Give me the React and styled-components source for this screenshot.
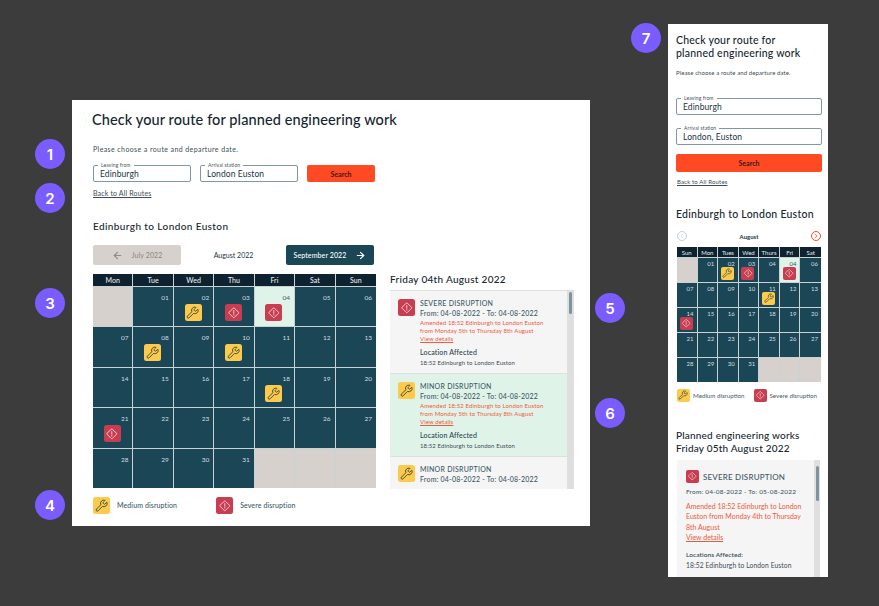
import React from "react";
import styled, { createGlobalStyle } from "styled-components";
import { ArrowLeft, ArrowRight, ChevronLeft, ChevronRight, Wrench } from "lucide-react";

const GlobalStyle = createGlobalStyle`
  * {
    margin: 0;
    padding: 0;
    box-sizing: border-box;
  }
  html, body {
    width: 879px;
    height: 606px;
    overflow: hidden;
    background: #3c3c3c;
    font-family: "Lato", "Noto Sans", sans-serif;
    color: #16303d;
  }
`;

const desktopDays = [
  [null, "01", "02", "03", "04", "05", "06"],
  ["07", "08", "09", "10", "11", "12", "13"],
  ["14", "15", "16", "17", "18", "19", "20"],
  ["21", "22", "23", "24", "25", "26", "27"],
  ["28", "29", "30", "31", null, null, null],
];

const mobileDays = [
  [null, "01", "02", "03", "04", "04", "06"],
  ["07", "08", "09", "10", "11", "12", "13"],
  ["14", "15", "16", "17", "18", "19", "20"],
  ["21", "22", "23", "24", "25", "26", "27"],
  ["28", "29", "30", "31", null, null, null],
];

const desktopMarks = {
  "0-2": "medium", "0-3": "severe", "0-4": "severe",
  "1-1": "medium", "1-3": "medium", "2-4": "medium", "3-0": "severe",
};

const mobileMarks = {
  "0-2": "medium", "0-3": "severe", "0-5": "severe",
  "1-4": "medium", "2-0": "severe",
};

const DiamondIcon = ({ size }) => (
  <svg width={size} height={size} viewBox="0 0 24 24" fill="none" stroke="currentColor" strokeWidth="1.5">
    <rect x="5.5" y="5.5" width="13" height="13" rx="1.5" transform="rotate(45 12 12)" />
    <path d="M12 8v5M12 15.2v1" strokeLinecap="round" />
  </svg>
);

const Badge = ({ kind, size, radius }) => (
  <Marker $kind={kind} $size={size} $radius={radius}>
    {kind === "severe" ? (
      <DiamondIcon size={size * 0.8} />
    ) : (
      <Wrench size={size * 0.78} strokeWidth={1.7} />
    )}
  </Marker>
);

const Calendar = ({ compact, heads, days, marks, today }) => (
  <CalendarGrid $compact={compact}>
    {heads.map((head) => (
      <HeadCell key={head} $compact={compact}>{head}</HeadCell>
    ))}
    {days.map((row, r) =>
      row.map((day, c) => (
        <DayCell key={`${r}-${c}`} $compact={compact} $empty={!day} $today={`${r}-${c}` === today}>
          {day}
          {marks[`${r}-${c}`] && (
            <MarkSlot $compact={compact}>
              <Badge kind={marks[`${r}-${c}`]} size={compact ? 13 : 17} radius={compact ? 2 : 2.5} />
            </MarkSlot>
          )}
        </DayCell>
      ))
    )}
  </CalendarGrid>
);

const Disruption = ({ kind, title, green, brief }) => (
  <Item $green={green}>
    <Badge kind={kind} size={17} radius={2.5} />
    <ItemBody>
      <ItemTitle>{title}</ItemTitle>
      <ItemDates>From: 04-08-2022 - To: 04-08-2022</ItemDates>
      {!brief && (
        <>
          <Amended>
            Amended 18:52 Edinburgh to London Euston
            <br />
            from Monday 5th to Thursday 8th August
            <br />
            <u>View details</u>
          </Amended>
          <ItemLabel>Location Affected</ItemLabel>
          <ItemLine>18:52 Edinburgh to London Euston</ItemLine>
        </>
      )}
    </ItemBody>
  </Item>
);

const App = () => {
  return (
    <Canvas>
      <GlobalStyle />

      <Desktop>
        <Title>Check your route for planned engineering work</Title>
        <Intro>Please choose a route and departure date.</Intro>
        <SearchRow>
          <Field $width={98}>
            <FieldLabel>Leaving from</FieldLabel>
            Edinburgh
          </Field>
          <Field $width={98}>
            <FieldLabel>Arrival station</FieldLabel>
            London Euston
          </Field>
          <SearchButton $width={68}>Search</SearchButton>
        </SearchRow>
        <BackLink>Back to All Routes</BackLink>
        <RouteHeading>Edinburgh to London Euston</RouteHeading>

        <MonthNav>
          <MonthButton $disabled>
            <ArrowLeft size={11} strokeWidth={2.5} />
            July 2022
          </MonthButton>
          <MonthName>August 2022</MonthName>
          <MonthButton>
            September 2022
            <ArrowRight size={11} strokeWidth={2.5} />
          </MonthButton>
        </MonthNav>

        <Columns>
          <div>
            <Calendar
              heads={["Mon", "Tue", "Wed", "Thu", "Fri", "Sat", "Sun"]}
              days={desktopDays}
              marks={desktopMarks}
              today="0-4"
            />
            <Legend>
              <LegendEntry>
                <Badge kind="medium" size={17} radius={2.5} />
                Medium disruption
              </LegendEntry>
              <LegendEntry>
                <Badge kind="severe" size={17} radius={2.5} />
                Severe disruption
              </LegendEntry>
            </Legend>
          </div>
          <div>
            <DayHeading>Friday 04th August 2022</DayHeading>
            <ListBox>
              <Disruption kind="severe" title="SEVERE DISRUPTION" />
              <Disruption kind="medium" title="MINOR DISRUPTION" green />
              <Disruption kind="medium" title="MINOR DISRUPTION" brief />
              <ScrollThumb />
            </ListBox>
          </div>
        </Columns>
      </Desktop>

      <Mobile>
        <MobileTitle>
          Check your route for
          <br />
          planned engineering work
        </MobileTitle>
        <MobileIntro>Please choose a route and departure date.</MobileIntro>
        <MobileForm>
          <Field>
            <FieldLabel>Leaving from</FieldLabel>
            Edinburgh
          </Field>
          <Field>
            <FieldLabel>Arrival station</FieldLabel>
            London, Euston
          </Field>
          <MobileSearch>Search</MobileSearch>
        </MobileForm>
        <MobileBack>Back to All Routes</MobileBack>
        <MobileRoute>Edinburgh to London Euston</MobileRoute>
        <MobileNav>
          <RoundArrow $color="#c5d0d6"><ChevronLeft size={8} strokeWidth={2} /></RoundArrow>
          <MobileMonth>August</MobileMonth>
          <RoundArrow $color="#ff4a24"><ChevronRight size={8} strokeWidth={2} /></RoundArrow>
        </MobileNav>
        <Calendar
          compact
          heads={["Sun", "Mon", "Tues", "Wed", "Thurs", "Fri", "Sat"]}
          days={mobileDays}
          marks={mobileMarks}
          today="0-5"
        />
        <MobileLegend>
          <MobileLegendEntry>
            <Badge kind="medium" size={13} radius={2} />
            Medium disruption
          </MobileLegendEntry>
          <MobileLegendEntry>
            <Badge kind="severe" size={13} radius={2} />
            Severe disruption
          </MobileLegendEntry>
        </MobileLegend>
        <MobileWorks>
          Planned engineering works
          <br />
          Friday 05th August 2022
        </MobileWorks>
        <MobileBox>
          <MobileItemHead>
            <Badge kind="severe" size={13} radius={2} />
            SEVERE DISRUPTION
          </MobileItemHead>
          <MobileDates>From: 04-08-2022 - To: 05-08-2022</MobileDates>
          <MobileAmended>
            Amended 18:52 Edinburgh to London
            <br />
            Euston from Monday 4th to Thursday
            <br />
            8th August
            <br />
            <u>View details</u>
          </MobileAmended>
          <MobileLabel>Locations Affected:</MobileLabel>
          <MobileLine>18:52 Edinburgh to London Euston</MobileLine>
          <MobileThumb />
        </MobileBox>
      </Mobile>

      <Step $x={35} $y={139}>1</Step>
      <Step $x={35} $y={183}>2</Step>
      <Step $x={35} $y={288}>3</Step>
      <Step $x={35} $y={490}>4</Step>
      <Step $x={595} $y={293}>5</Step>
      <Step $x={595} $y={398}>6</Step>
      <Step $x={631} $y={23}>7</Step>
    </Canvas>
  );
};

export default App;

const Canvas = styled.div`
  position: relative;
  width: 879px;
  height: 606px;
  overflow: hidden;
  background: #3c3c3c;
`;

/* the two artboards and the numbered pins sit on a free canvas */
const Desktop = styled.section`
  position: absolute;
  left: 72px;
  top: 100px;
  width: 518px;
  height: 426px;
  padding: 11px 14px 0 21px;
  background: #fff;
`;

const Mobile = styled.section`
  position: absolute;
  left: 668px;
  top: 24px;
  width: 160px;
  height: 553px;
  padding: 10px 6px 0 8px;
  background: #fff;
  overflow: hidden;
`;

const Step = styled.div`
  position: absolute;
  left: ${(p) => p.$x}px;
  top: ${(p) => p.$y}px;
  width: 30px;
  height: 30px;
  display: flex;
  align-items: center;
  justify-content: center;
  border-radius: 50%;
  background: #7a5cff;
  color: #fff;
  font-family: "Inter", sans-serif;
  font-size: 15px;
  font-weight: 600;
`;

const Title = styled.h1`
  margin-left: -1px;
  font-size: 14.5px;
  line-height: 18px;
  font-weight: 500;
  letter-spacing: 0.1px;
  color: #16262f;
`;

const Intro = styled.p`
  margin-top: 16px;
  font-size: 7px;
  line-height: 9px;
  letter-spacing: 0.4px;
  color: #3d4c55;
`;

const SearchRow = styled.div`
  display: flex;
  gap: 9px;
  margin-top: 11px;
`;

const Field = styled.div`
  position: relative;
  width: ${(p) => (p.$width ? `${p.$width}px` : "100%")};
  height: 17px;
  padding-left: 6px;
  border: 1px solid #7f98a3;
  border-radius: 2px;
  font-size: 8.5px;
  line-height: 16px;
  letter-spacing: 0.1px;
  color: #22353f;
`;

const FieldLabel = styled.span`
  position: absolute;
  left: 4px;
  top: -4px;
  padding: 0 3px;
  background: #fff;
  font-size: 5px;
  line-height: 6px;
  color: #44545c;
`;

const SearchButton = styled.button`
  width: ${(p) => (p.$width ? `${p.$width}px` : "100%")};
  height: 17px;
  border: 0;
  border-radius: 2px;
  background: #ff4a24;
  font-family: inherit;
  font-size: 7px;
  font-weight: 700;
  color: #3a1a12;
`;

const BackLink = styled.a`
  display: block;
  margin-top: 7px;
  font-size: 7px;
  line-height: 9px;
  letter-spacing: 0.15px;
  text-decoration: underline;
  color: #3d4c55;
`;

const RouteHeading = styled.h2`
  margin-top: 22px;
  font-size: 10px;
  line-height: 13px;
  font-weight: 500;
  letter-spacing: 0.4px;
  color: #16262f;
`;

const MonthNav = styled.div`
  display: grid;
  grid-template-columns: 88px 105px 88px;
  align-items: center;
  margin-top: 12px;
  width: 281px;
`;

const MonthButton = styled.div`
  display: flex;
  align-items: center;
  justify-content: center;
  gap: 9px;
  height: 20px;
  border-radius: 2px;
  font-size: 7px;
  font-weight: 500;
  letter-spacing: 0.1px;
  background: ${(p) => (p.$disabled ? "#d6d1cc" : "#1a4656")};
  color: ${(p) => (p.$disabled ? "#8f8b87" : "#fff")};
`;

const MonthName = styled.div`
  text-align: center;
  font-size: 7px;
  color: #22353f;
`;

const Columns = styled.div`
  display: grid;
  grid-template-columns: 283px 184px;
  column-gap: 14px;
  margin-top: 9px;
`;

const CalendarGrid = styled.div`
  display: grid;
  grid-template-columns: repeat(7, 1fr);
  grid-template-rows: ${(p) => (p.$compact ? "10px repeat(5, 25px)" : "12px repeat(5, 40.4px)")};
  width: ${(p) => (p.$compact ? "144px" : "283px")};
  margin-left: ${(p) => (p.$compact ? "1px" : "0")};
  background: #c9d2d5;
`;

const HeadCell = styled.div`
  display: flex;
  align-items: center;
  justify-content: center;
  background: #0f2230;
  color: #e8edef;
  font-size: ${(p) => (p.$compact ? "6px" : "7px")};
  font-weight: ${(p) => (p.$compact ? 400 : 500)};
  border-right: 1px solid #c9d2d5;
  &:nth-child(7) {
    border-right: 0;
  }
`;

const DayCell = styled.div`
  display: flex;
  flex-direction: column;
  align-items: flex-end;
  padding: ${(p) => (p.$compact ? "2px 3px 0 0" : "6px 4px 0 0")};
  font-size: ${(p) => (p.$compact ? "6px" : "6.5px")};
  line-height: ${(p) => (p.$compact ? "7px" : "9px")};
  border-right: 1px solid #c9d2d5;
  border-top: 1px solid #c9d2d5;
  &:nth-child(7n) {
    border-right: 0;
  }
  background: ${(p) => (p.$today ? "#e0f3e9" : p.$empty ? "#d6d1cc" : "#1a4656")};
  color: ${(p) => (p.$today ? "#3d5a68" : "#d4dde0")};
`;

const MarkSlot = styled.div`
  align-self: center;
  margin-top: ${(p) => (p.$compact ? "0" : "2px")};
  margin-left: ${(p) => (p.$compact ? "2px" : "3px")};
  line-height: 0;
`;

const Marker = styled.span`
  display: inline-flex;
  flex: none;
  align-items: center;
  justify-content: center;
  width: ${(p) => p.$size}px;
  height: ${(p) => p.$size}px;
  border-radius: ${(p) => p.$radius}px;
  background: ${(p) => (p.$kind === "severe" ? "#c83d50" : "#fcca4d")};
  color: ${(p) => (p.$kind === "severe" ? "#f7d9dc" : "#3f4a3a")};
`;

const Legend = styled.div`
  display: flex;
  gap: 39px;
  margin-top: 9px;
`;

const LegendEntry = styled.div`
  display: flex;
  align-items: center;
  gap: 7px;
  font-size: 7px;
  font-weight: 500;
  letter-spacing: 0.1px;
  color: #3e5a68;
`;

const DayHeading = styled.h3`
  margin-top: -1px;
  height: 17px;
  font-size: 10px;
  line-height: 12px;
  font-weight: 500;
  letter-spacing: 0.3px;
  color: #16262f;
`;

const ListBox = styled.div`
  position: relative;
  height: 199px;
  padding-right: 7px;
  overflow: hidden;
  background: #dfdfdf;
`;

const ScrollThumb = styled.div`
  position: absolute;
  right: 2px;
  top: 2px;
  width: 3px;
  height: 22px;
  border-radius: 2px;
  background: #7f92a0;
`;

const Item = styled.article`
  display: flex;
  gap: 5px;
  height: 83px;
  padding: 8px 6px 0 8px;
  border-top: 1px solid #dfdfdf;
  background: ${(p) => (p.$green ? "#e0f3e9" : "#f5f5f5")};
`;

const ItemBody = styled.div`
  min-width: 0;
`;

const ItemTitle = styled.div`
  font-size: 7px;
  line-height: 8px;
  font-weight: 500;
  letter-spacing: 0.25px;
  color: #3e5a68;
`;

const ItemDates = styled.div`
  margin-top: 2px;
  font-size: 7px;
  line-height: 9px;
  font-weight: 500;
  letter-spacing: 0.2px;
  color: #3e5a68;
`;

const Amended = styled.div`
  margin-top: 0.5px;
  font-size: 6px;
  line-height: 8px;
  letter-spacing: 0.12px;
  color: #f0593c;
`;

const ItemLabel = styled.div`
  margin-top: 5.5px;
  font-size: 7px;
  line-height: 9px;
  font-weight: 500;
  letter-spacing: 0.15px;
  color: #28444f;
`;

const ItemLine = styled.div`
  margin-top: 1.5px;
  font-size: 6px;
  line-height: 8px;
  letter-spacing: 0.1px;
  color: #3d4c55;
`;

const MobileTitle = styled.h1`
  font-size: 10.5px;
  line-height: 12.5px;
  font-weight: 500;
  letter-spacing: 0.2px;
  color: #16262f;
`;

const MobileIntro = styled.p`
  margin-top: 10px;
  font-size: 6px;
  line-height: 8px;
  letter-spacing: 0.1px;
  color: #3d4c55;
`;

const MobileForm = styled.div`
  display: flex;
  flex-direction: column;
  gap: 13px;
  margin-top: 21px;
`;

const MobileSearch = styled(SearchButton)`
  height: 18px;
  margin-top: -4px;
`;

const MobileBack = styled(BackLink)`
  margin-top: 5px;
  padding-left: 1px;
  font-size: 6px;
`;

const MobileRoute = styled.h2`
  margin-top: 22px;
  font-size: 10.5px;
  line-height: 13px;
  font-weight: 500;
  letter-spacing: 0.25px;
  color: #16262f;
`;

const MobileNav = styled.div`
  display: flex;
  align-items: center;
  justify-content: space-between;
  margin: 10px 0 6px 1px;
  width: 144px;
  height: 10px;
  color: #22353f;
`;

const RoundArrow = styled.span`
  display: inline-flex;
  align-items: center;
  justify-content: center;
  width: 10px;
  height: 10px;
  border: 1px solid ${(p) => p.$color};
  border-radius: 50%;
  color: ${(p) => p.$color};
`;

const MobileMonth = styled.span`
  font-size: 6px;
  font-weight: 700;
`;

const MobileLegend = styled.div`
  display: flex;
  gap: 9px;
  margin: 7px 0 0 1px;
`;

const MobileLegendEntry = styled.div`
  display: flex;
  align-items: center;
  gap: 3px;
  font-size: 6.2px;
  white-space: nowrap;
  color: #3e5a68;
`;

const MobileWorks = styled.h2`
  margin-top: 27px;
  font-size: 10px;
  line-height: 12.5px;
  font-weight: 500;
  letter-spacing: 0.2px;
  color: #16262f;
`;

const MobileBox = styled.div`
  position: relative;
  margin: 6px 0 0 1px;
  width: 143px;
  height: 130px;
  padding: 10px 8px 0 9px;
  background: #f5f5f5;
`;

const MobileThumb = styled.div`
  position: absolute;
  right: 0;
  top: 0;
  width: 6px;
  height: 100%;
  background: #dfdfdf;
  &::after {
    content: "";
    position: absolute;
    left: 2px;
    top: 6px;
    width: 3px;
    height: 35px;
    border-radius: 2px;
    background: #7f92a0;
  }
`;

const MobileItemHead = styled.div`
  display: flex;
  align-items: center;
  gap: 4px;
  font-size: 8px;
  font-weight: 500;
  letter-spacing: 0.2px;
  color: #3e5a68;
`;

const MobileDates = styled.div`
  margin-top: 5px;
  font-size: 6.5px;
  line-height: 8px;
  font-weight: 500;
  letter-spacing: 0.2px;
  color: #3e5a68;
`;

const MobileAmended = styled.div`
  margin-top: 5px;
  font-size: 7px;
  line-height: 10.3px;
  white-space: nowrap;
  color: #f0593c;
`;

const MobileLabel = styled.div`
  margin-top: 9px;
  font-size: 6.5px;
  line-height: 8px;
  font-weight: 500;
  letter-spacing: 0.1px;
  color: #28444f;
`;

const MobileLine = styled.div`
  margin-top: 2px;
  font-size: 6.7px;
  line-height: 8px;
  letter-spacing: 0.1px;
  color: #3d4c55;
`;
